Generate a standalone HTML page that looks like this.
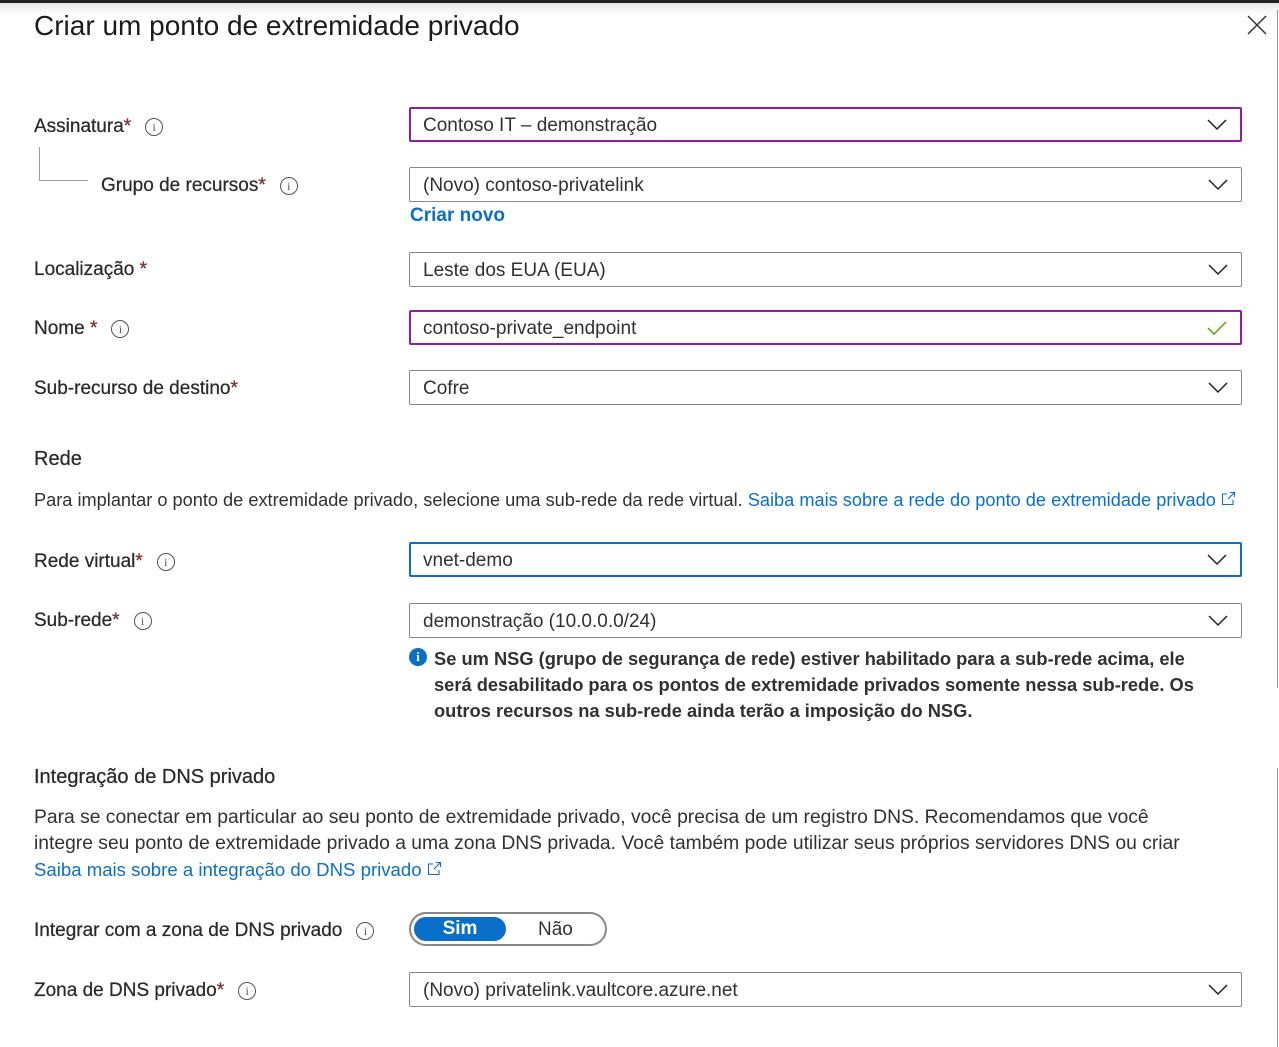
<!DOCTYPE html>
<html><head><meta charset="utf-8"><style>
body{margin:0;width:1279px;height:1047px;background:#fff;position:relative;overflow:hidden;font-family:"Liberation Sans",sans-serif;color:#323130;}
.a{position:absolute;white-space:nowrap}
.lbl{font-size:19px;color:#2b2a29;line-height:24px;-webkit-text-stroke:0.25px #2b2a29}
.req{color:#a4262c}
.i{display:inline-block;width:16px;height:16px;border:1px solid #555;border-radius:50%;font-size:12px;line-height:16px;text-align:center;color:#555;font-family:"Liberation Serif",serif;vertical-align:1px;margin-left:14px;-webkit-text-stroke:0}
.f{position:absolute;left:409px;width:833px;height:35px;border:1px solid #8a8886;border-radius:2px;font-size:19px;line-height:35px;padding-left:13px;box-sizing:border-box;color:#323130}
.p{border:2px solid #8c1ea6;padding-left:12px;line-height:33px}
.b{border:2px solid #0a6fc8;padding-left:12px;line-height:33px}
.chev{position:absolute;right:13px;top:50%;margin-top:-6px}
.t{font-size:18.2px;line-height:26px;color:#323130}
.lnk{color:#0a6fc8}
</style></head><body>
<div class="a" style="left:0;top:0;width:1279px;height:3px;background:#222"></div>
<div class="a" style="left:0;top:3px;width:1279px;height:12px;background:linear-gradient(#e6e6e6,#fff)"></div>
<div class="a" style="left:1277px;top:10px;width:1px;height:678px;background:#999"></div>
<div class="a" style="left:1277px;top:768px;width:1px;height:279px;background:#999"></div>
<div class="a" style="left:34px;top:10px;font-size:28px;color:#1b1b1b">Criar um ponto de extremidade privado</div>
<svg class="a" style="left:1247px;top:15px" width="20" height="20"><path d="M1 1L19 19M19 1L1 19" stroke="#333" stroke-width="1.5"/></svg>

<div class="a lbl" style="left:34px;top:115px">Assinatura<span class="req">*</span><span class="i">i</span></div>
<div class="a" style="left:39px;top:147px;width:1px;height:33px;background:#999"></div>
<div class="a" style="left:39px;top:180px;width:49px;height:1px;background:#999"></div>
<div class="a lbl" style="left:101px;top:174px">Grupo de recursos<span class="req">*</span><span class="i">i</span></div>
<div class="a lbl" style="left:34px;top:258px">Localização <span class="req">*</span></div>
<div class="a lbl" style="left:34px;top:317px">Nome <span class="req">*</span><span class="i">i</span></div>
<div class="a lbl" style="left:34px;top:377px">Sub-recurso de destino<span class="req">*</span></div>

<div class="f p" style="top:107px">Contoso IT – demonstração<svg class="chev" width="20" height="12"><path d="M1 1L10 10L19 1" fill="none" stroke="#222" stroke-width="1.5"/></svg></div>
<div class="f" style="top:167px">(Novo) contoso-privatelink<svg class="chev" width="20" height="12"><path d="M1 1L10 10L19 1" fill="none" stroke="#222" stroke-width="1.5"/></svg></div>
<div class="a" style="left:410px;top:205px;font-size:19px;color:#0a6fc8;font-weight:bold">Criar novo</div>
<div class="f" style="top:252px">Leste dos EUA (EUA)<svg class="chev" width="20" height="12"><path d="M1 1L10 10L19 1" fill="none" stroke="#222" stroke-width="1.5"/></svg></div>
<div class="f p" style="top:310px">contoso-private_endpoint<svg class="chev" width="20" height="14" style="margin-top:-7px"><path d="M1 7L7 13L19 1" fill="none" stroke="#57a300" stroke-width="1.5"/></svg></div>
<div class="f" style="top:370px">Cofre<svg class="chev" width="20" height="12"><path d="M1 1L10 10L19 1" fill="none" stroke="#222" stroke-width="1.5"/></svg></div>

<div class="a lbl" style="left:34px;top:447px;font-size:20px">Rede</div>
<div class="a t" style="left:34px;top:487px">Para implantar o ponto de extremidade privado, selecione uma sub-rede da rede virtual. <span class="lnk">Saiba mais sobre a rede do ponto de extremidade privado <svg width="15" height="15" style="vertical-align:0"><path d="M9 1.5h4.5V6M13.5 1.5L7 8M6 3H1.5v10.5H12V9" fill="none" stroke="#0a6fc8" stroke-width="1.1"/></svg></span></div>

<div class="a lbl" style="left:34px;top:550px">Rede virtual<span class="req">*</span><span class="i">i</span></div>
<div class="a lbl" style="left:34px;top:609px">Sub-rede<span class="req">*</span><span class="i">i</span></div>
<div class="f b" style="top:542px">vnet-demo<svg class="chev" width="20" height="12"><path d="M1 1L10 10L19 1" fill="none" stroke="#222" stroke-width="1.5"/></svg></div>
<div class="f" style="top:603px">demonstração (10.0.0.0/24)<svg class="chev" width="20" height="12"><path d="M1 1L10 10L19 1" fill="none" stroke="#222" stroke-width="1.5"/></svg></div>
<div class="a" style="left:409px;top:648px;width:18px;height:18px;border-radius:50%;background:#0a6fc8;color:#fff;font-size:13px;font-weight:bold;text-align:center;line-height:18px;font-family:'Liberation Serif',serif">i</div>
<div class="a t" style="left:434px;top:646px;font-weight:bold;color:#323130;font-size:18.3px">Se um NSG (grupo de segurança de rede) estiver habilitado para a sub-rede acima, ele<br>será desabilitado para os pontos de extremidade privados somente nessa sub-rede. Os<br>outros recursos na sub-rede ainda terão a imposição do NSG.</div>

<div class="a lbl" style="left:34px;top:765px;font-size:20px">Integração de DNS privado</div>
<div class="a t" style="left:34px;top:805px;font-size:19.3px">Para se conectar em particular ao seu ponto de extremidade privado, você precisa de um registro DNS. Recomendamos que você<br>integre seu ponto de extremidade privado a uma zona DNS privada. Você também pode utilizar seus próprios servidores DNS ou criar<br><span class="lnk" style="font-size:18.6px">Saiba mais sobre a integração do DNS privado <svg width="15" height="15" style="vertical-align:0"><path d="M9 1.5h4.5V6M13.5 1.5L7 8M6 3H1.5v10.5H12V9" fill="none" stroke="#0a6fc8" stroke-width="1.1"/></svg></span></div>

<div class="a lbl" style="left:34px;top:919px">Integrar com a zona de DNS privado<span class="i">i</span></div>
<div class="a" style="left:409px;top:912px;width:194px;height:30px;border:2px solid #8a8886;border-radius:17px"></div>
<div class="a" style="left:414px;top:917px;width:92px;height:24px;border-radius:12px;background:#0a6fc8;color:#fff;font-size:19px;font-weight:bold;text-align:center;line-height:24px">Sim</div>
<div class="a" style="left:538px;top:918px;font-size:19px;line-height:24px">Não</div>
<div class="a lbl" style="left:34px;top:979px">Zona de DNS privado<span class="req">*</span><span class="i">i</span></div>
<div class="f" style="top:972px">(Novo) privatelink.vaultcore.azure.net<svg class="chev" width="20" height="12"><path d="M1 1L10 10L19 1" fill="none" stroke="#222" stroke-width="1.5"/></svg></div>
</body></html>
